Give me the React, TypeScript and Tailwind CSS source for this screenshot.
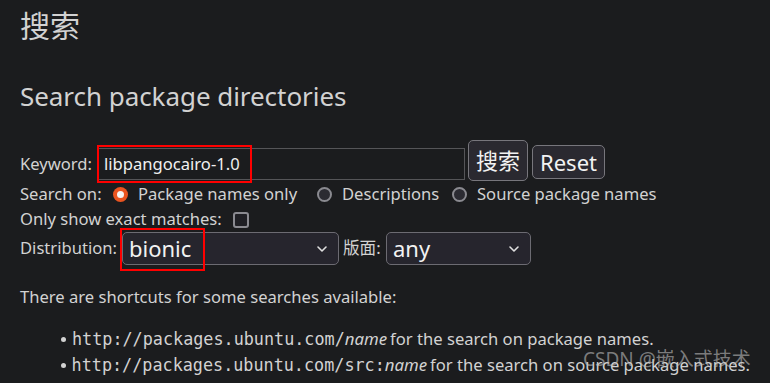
import React from "react";

const sans = { fontFamily: '"Noto Sans", "Noto Sans CJK SC", sans-serif' };
const mono = { fontFamily: '"DejaVu Sans Mono", monospace' };

function Chevron() {
  return (
    <svg width="12" height="8" viewBox="0 0 12 8" className="absolute right-[10px] top-1/2 -translate-y-1/2">
      <path d="M2 2 L6 6 L10 2" stroke="#e0e0e0" strokeWidth="1.6" fill="none" strokeLinecap="round" strokeLinejoin="round" />
    </svg>
  );
}

function Radio({ checked }: { checked?: boolean }) {
  return checked ? (
    <span className="shrink-0 w-[15px] h-[15px] rounded-full bg-[#e95420] flex items-center justify-center">
      <span className="block w-[7px] h-[7px] rounded-full bg-[#f4f4f4]" />
    </span>
  ) : (
    <span className="shrink-0 block w-[15px] h-[15px] rounded-full border-2 border-[#8a8a90] bg-[#2b2b32]" />
  );
}

export default function App() {
  return (
    <div className="relative w-[770px] h-[383px] overflow-hidden bg-[#1b1c1e] text-[#d2d2d2] px-5" style={sans}>
      <h1 className="text-[30px] leading-none pt-[11px] h-[48px] font-normal">搜索</h1>
      <h2 className="text-[26px] leading-none mt-[35px] h-[40px] font-normal tracking-[-0.05px]">Search package directories</h2>

      <div className="flex items-start mt-[17px] h-[41px] text-[16.6px]">
        <span className="w-[77px] mt-[11px] leading-[26px] shrink-0">Keyword:</span>
        <div className="relative mt-[8px]">
          <div className="w-[368px] h-[32px] border border-[#555558] bg-[#1b1c1e] flex items-center pl-[6px] text-[16.6px] text-[#f0f0f0]">
            libpangocairo-1.0
          </div>
          <div className="absolute left-0 top-[-3px] w-[155px] h-[38px] border-2 border-[#ff0000]" />
        </div>
        <button className="ml-[3px] w-[60px] h-[41px] rounded-[5px] border border-[#77767c] bg-[#2a2930] text-[22px] text-[#f2f2f2] flex items-center justify-center">
          搜索
        </button>
        <button className="ml-[4px] mt-[5px] w-[73px] h-[34px] rounded-[5px] border border-[#77767c] bg-[#2a2930] text-[22px] text-[#f2f2f2] flex items-center justify-center">
          Reset
        </button>
      </div>

      <div className="flex items-center h-[26px] text-[16.6px]">
        <span className="w-[93px] shrink-0">Search on:</span>
        <Radio checked />
        <span className="ml-[10px] w-[179px] shrink-0">Package names only</span>
        <Radio />
        <span className="ml-[10px] w-[110px] shrink-0">Descriptions</span>
        <Radio />
        <span className="ml-[10px]">Source package names</span>
      </div>

      <div className="flex items-center h-[25px] text-[16.6px]">
        <span className="w-[213px] shrink-0">Only show exact matches:</span>
        <span className="shrink-0 block w-[16px] h-[16px] rounded-[3px] border-2 border-[#8a8a90] bg-[#1f1f24]" />
      </div>

      <div className="flex items-center h-[33px] text-[16.6px]">
        <span className="w-[102px] shrink-0">Distribution:</span>
        <div className="relative w-[217px] h-[33px] rounded-[5px] border border-[#6c6b72] bg-[#26252d] flex items-center pl-[6px] text-[22px] text-[#f2f2f2]">
          bionic
          <Chevron />
          <div className="absolute left-[-3px] top-[-5px] w-[85px] h-[43px] border-2 border-[#ff0000]" />
        </div>
        <span className="ml-[4px] w-[43px] shrink-0">版面:</span>
        <div className="relative w-[145px] h-[33px] rounded-[5px] border border-[#6c6b72] bg-[#26252d] flex items-center pl-[6px] text-[22px] text-[#f2f2f2]">
          any
          <Chevron />
        </div>
      </div>

      <p className="text-[16.6px] mt-[21px] leading-[22px]">There are shortcuts for some searches available:</p>

      <ul className="mt-[18px] pl-[41px] text-[16.6px]">
        <li className="flex items-center h-[26px] whitespace-nowrap">
          <span className="w-[11px] flex items-center"><span className="block w-[5px] h-[5px] rounded-full bg-[#d2d2d2]" /></span>
          <code className="text-[16.8px]" style={mono}>
            http://packages.ubuntu.com/<i style={sans}>name</i>
          </code>
          <span className="ml-[3px]">for the search on package names.</span>
        </li>
        <li className="flex items-center h-[26px] whitespace-nowrap">
          <span className="w-[11px] flex items-center"><span className="block w-[5px] h-[5px] rounded-full bg-[#d2d2d2]" /></span>
          <code className="text-[16.8px]" style={mono}>
            http://packages.ubuntu.com/src:<i style={sans}>name</i>
          </code>
          <span className="ml-[3px]">for the search on source package names.</span>
        </li>
      </ul>

      <div className="absolute left-[583px] top-[350px] text-[19px] text-[#bdbdbd]/60 leading-none whitespace-nowrap">CSDN @嵌入式技术</div>
    </div>
  );
}
